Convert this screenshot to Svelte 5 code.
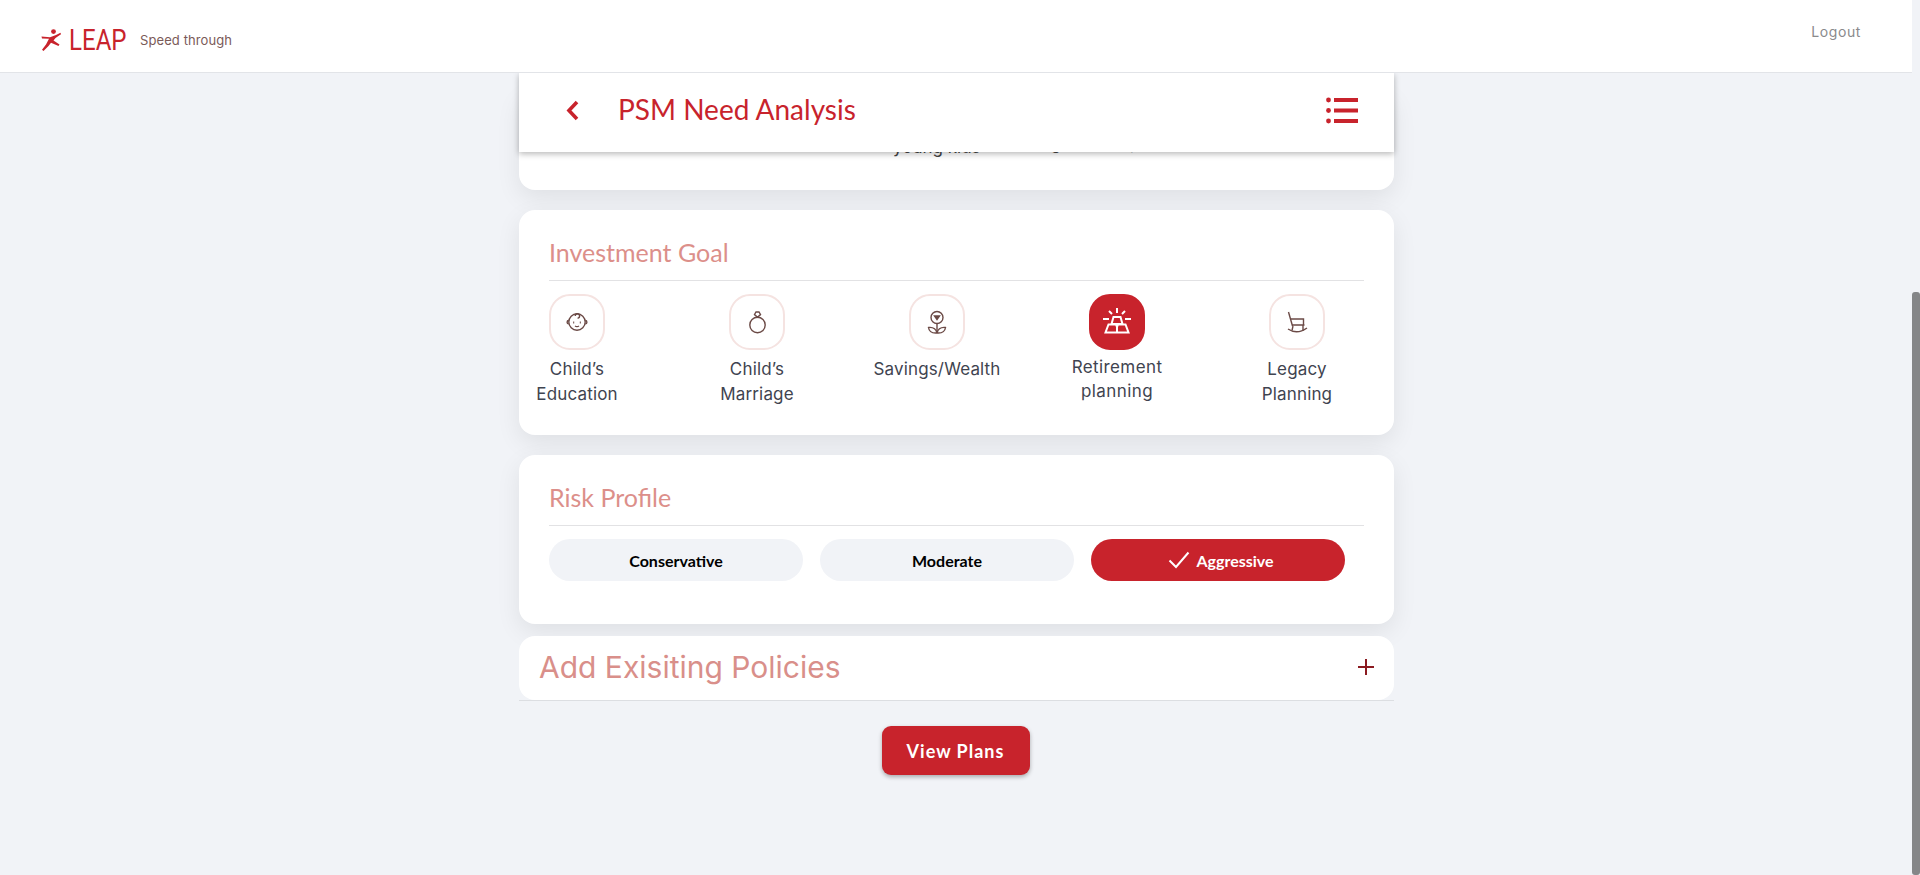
<script>
  const goals = [
    { id: 'edu', lines: ['Child’s', 'Education'] },
    { id: 'marriage', lines: ['Child’s', 'Marriage'] },
    { id: 'wealth', lines: ['Savings/Wealth'] },
    { id: 'retire', lines: ['Retirement', 'planning'], active: true },
    { id: 'legacy', lines: ['Legacy', 'Planning'] }
  ]
  const risks = ['Conservative', 'Moderate', 'Aggressive']
  let risk = $state('Aggressive')
</script>

<div class="shell">
  <div class="page">
    <header class="topbar">
      <div class="brand">
        <svg class="runner" viewBox="0 0 20 22" aria-hidden="true">
          <circle cx="12.5" cy="2.6" r="2.4" fill="#c8232c" />
          <path d="M0.5 7.5 L9 8.2 L15 6 L19.5 3.8 L20 5.2 L14.5 9 L12.5 11.5 L18.5 15.5 L17.5 17 L10 13.8 L7.5 17 L2.5 22 L1 20.8 L5 15.5 L8 9.8 L1 9.5 Z" fill="#c8232c" />
        </svg>
        <span class="leap">LEAP</span>
        <span class="tagline">Speed through</span>
      </div>
      <span class="logout">Logout</span>
    </header>

    <main class="content">
      <div class="titlebar">
        <svg class="back" viewBox="0 0 13 21" aria-hidden="true">
          <path d="M11 2 L3 10.5 L11 19" fill="none" stroke="#c8232c" stroke-width="3.6" />
        </svg>
        <h1>PSM Need Analysis</h1>
        <svg class="menu" viewBox="0 0 32 27" aria-hidden="true">
          <g fill="#c8232c">
            <circle cx="2.5" cy="3" r="2.4" /><rect x="8" y="1" width="24" height="4" />
            <circle cx="2.5" cy="13.5" r="2.4" /><rect x="8" y="11.5" width="24" height="4" />
            <circle cx="2.5" cy="24" r="2.4" /><rect x="8" y="22" width="24" height="4" />
          </g>
        </svg>
      </div>

      <section class="card hidden-card">
        <p><span>young kids</span><span class="upper">are being raised up</span></p>
      </section>

      <section class="card goal-card">
        <h2>Investment Goal</h2>
        <div class="goals">
          {#each goals as goal}
            <div class="goal" class:active={goal.active}>
              <div class="goal-icon">
                <svg viewBox="0 0 32 32" aria-hidden="true">
                  {#if goal.id === 'edu'}
                    <circle cx="16" cy="16" r="8.2" />
                    <path d="M7.8 14.5 a1.7 1.7 0 0 0 0 3.4 M24.2 14.5 a1.7 1.7 0 0 1 0 3.4" />
                    <path d="M14.2 10 a2.2 2.2 0 1 1 2.4 2.2" />
                    <path d="M14 20 q2 1.3 4 0" />
                    <path d="M12.2 16.5 h1 M18.8 16.5 h1" stroke-width="1.8" />
                  {:else if goal.id === 'marriage'}
                    <circle cx="16.5" cy="19" r="7.7" />
                    <path d="M13.5 8.5 L15 6 H18 L19.5 8.5 L16.5 11.3 Z" />
                  {:else if goal.id === 'wealth'}
                    <circle cx="16" cy="11.5" r="6" />
                    <path d="M13.5 10 h5 l-2.5 3.5 Z" fill="#6b4a46" />
                    <path d="M16 17.5 V27" />
                    <path d="M16 27 C10 27.5 8 25 7.5 21.5 C12 21 15 23 16 27 C17 23 20 21 24.5 21.5 C24 25 22 27.5 16 27 Z" />
                  {:else if goal.id === 'retire'}
                    <path d="M16 2 V7 M8 5 L11 8 M24 5 L21 8 M2 13 H8 M24 13 H30" />
                    <path d="M12.5 11 H19.5 L21.5 18 H10.5 Z" />
                    <path d="M7.5 18.5 H15 L16 21 L17 18.5 H24.5 L27.5 26.5 H4.5 Z M16 21 V26.5" />
                  {:else}
                    <path d="M7.5 6 L11.5 20" />
                    <path d="M10 13 H22.5 V19 M11 19 H23.5" />
                    <path d="M12 20 L11 24.5 M22 19 L22 25" />
                    <path d="M7 23 Q16 29 26 22" />
                  {/if}
                </svg>
              </div>
              <div class="goal-label">
                {#each goal.lines as line}
                  <span>{line}</span>
                {/each}
              </div>
            </div>
          {/each}
        </div>
      </section>

      <section class="card risk-card">
        <h2>Risk Profile</h2>
        <div class="risks">
          {#each risks as r}
            <button class="pill" class:selected={risk === r} onclick={() => (risk = r)}>
              {#if risk === r}
                <svg viewBox="0 0 22 18" aria-hidden="true">
                  <path d="M1.5 9.5 L8 16 L20.5 1.5" fill="none" stroke="#fff" stroke-width="2" />
                </svg>
              {/if}
              {r}
            </button>
          {/each}
        </div>
      </section>

      <div class="add-row">
        <section class="add-card">
          <span class="add-title">Add Exisiting Policies</span>
          <span class="plus"></span>
        </section>
      </div>

      <button class="view-plans">View Plans</button>
    </main>
  </div>

  <div class="scrolltrack"><div class="scrollthumb"></div></div>
</div>

<style>
  :global(body) {
    margin: 0;
    background: #f1f3f7;
    overflow: hidden;
  }

  .shell {
    display: flex;
    height: 875px;
    overflow: hidden;
    background: #f1f3f7;
    font-family: Inter, "Liberation Sans", sans-serif;
  }

  .page {
    flex: 1;
    min-width: 0;
  }

  .scrolltrack {
    width: 8px;
    padding-top: 292px;
    box-sizing: border-box;
  }

  .scrollthumb {
    height: 583px;
    background: #858688;
    border-radius: 3px;
  }

  .topbar {
    position: relative;
    z-index: 2;
    height: 73px;
    box-sizing: border-box;
    background: #fff;
    border-bottom: 1px solid #e2e4e8;
    display: flex;
    align-items: flex-start;
    justify-content: space-between;
  }

  .brand {
    display: flex;
    align-items: center;
    height: 40px;
    margin: 20px 0 0 41px;
  }

  .runner {
    width: 20px;
    height: 22px;
  }

  .leap {
    margin-left: 8px;
    width: 58px;
    font-family: Roboto, sans-serif;
    font-size: 29px;
    color: #c8232c;
    transform: scaleX(0.83);
    transform-origin: left center;
  }

  .tagline {
    margin-left: 13px;
    font-size: 13px;
    letter-spacing: 0.1px;
    color: #7a5a58;
  }

  .logout {
    margin: 23px 51px 0 0;
    font-size: 14px;
    letter-spacing: 0.6px;
    color: #8a8a8c;
  }

  .content {
    width: 875px;
    margin-left: 519px;
    display: flex;
    flex-direction: column;
  }

  .titlebar {
    position: relative;
    z-index: 1;
    height: 79px;
    box-sizing: border-box;
    background: #fff;
    box-shadow: 0 2px 6px rgba(0, 0, 0, 0.28);
    display: flex;
    align-items: flex-start;
    padding: 24px 36px 0 47px;
  }

  .back {
    width: 13px;
    height: 21px;
    margin-top: 3px;
  }

  h1 {
    margin: -6px 0 0 39px;
    flex: 1;
    font-family: Lato, sans-serif;
    font-size: 28px;
    line-height: 36px;
    font-weight: 400;
    color: #c8232c;
  }

  .menu {
    width: 32px;
    height: 27px;
  }

  .card {
    background: #fff;
    border-radius: 16px;
    box-shadow: 0 8px 24px rgba(0, 0, 0, 0.08);
    box-sizing: border-box;
    padding: 0 30px;
  }

  .hidden-card {
    height: 100px;
    margin-top: -62px;
    margin-bottom: 20px;
  }

  .hidden-card p {
    display: flex;
    align-items: flex-start;
    gap: 5px;
    margin: 0;
    padding-top: 46px;
    padding-left: 344px;
    font-size: 17px;
    line-height: 22px;
    color: #444;
  }

  .hidden-card .upper {
    margin-top: -4px;
  }

  h2 {
    margin: 0;
    height: 71px;
    box-sizing: border-box;
    padding-top: 26px;
    border-bottom: 1px solid #e2e2e4;
    font-family: Lato, sans-serif;
    font-size: 25px;
    line-height: 32px;
    font-weight: 400;
    color: #dc8f8a;
  }

  .goal-card {
    height: 225px;
    margin-bottom: 20px;
  }

  .goals {
    display: grid;
    grid-template-columns: repeat(5, 180px);
    margin-top: 13px;
  }

  .goal {
    width: 56px;
    display: flex;
    flex-direction: column;
    align-items: center;
  }

  .goal-icon {
    width: 56px;
    height: 56px;
    box-sizing: border-box;
    border: 2px solid #f5e3e1;
    border-radius: 21px;
    display: flex;
    align-items: center;
    justify-content: center;
  }

  .goal-icon svg {
    width: 32px;
    height: 32px;
    fill: none;
    stroke: #6b4a46;
    stroke-width: 1.4;
  }

  .goal.active .goal-icon {
    background: #c8232c;
    border-color: #c8232c;
  }

  .goal.active .goal-icon svg {
    stroke: #fff;
    stroke-width: 2;
  }

  .goal-label {
    flex: none;
    width: max-content;
    margin-top: 7px;
    display: flex;
    flex-direction: column;
    align-items: center;
    font-size: 17px;
    line-height: 25px;
    letter-spacing: 0.15px;
    color: #3f4450;
  }

  .goal.active .goal-label {
    margin-top: 5px;
    line-height: 24px;
    letter-spacing: 0.4px;
  }

  .risk-card {
    height: 169px;
    margin-bottom: 12px;
  }

  .risks {
    display: flex;
    gap: 17px;
    margin-top: 13px;
  }

  .pill {
    width: 254px;
    height: 42px;
    border: 0;
    padding: 0;
    border-radius: 21px;
    background: #f1f3f7;
    display: flex;
    align-items: center;
    justify-content: center;
    gap: 6px;
    font-family: Lato, sans-serif;
    font-size: 16px;
    font-weight: 700;
    color: #000;
  }

  .pill svg {
    width: 22px;
    height: 18px;
  }

  .pill.selected {
    padding-left: 6px;
    background: #c8232c;
    color: #fff;
  }

  .add-row {
    border-bottom: 1px solid #dcdee2;
  }

  .add-card {
    height: 64px;
    box-sizing: border-box;
    background: #fff;
    border-radius: 16px;
    display: flex;
    align-items: center;
    justify-content: space-between;
    padding: 0 20px 2px 20px;
  }

  .add-title {
    font-family: Inter, sans-serif;
    font-size: 30px;
    color: #d98f8a;
  }

  .plus {
    width: 16px;
    height: 16px;
    background:
      linear-gradient(#8b1a20, #8b1a20) center / 16px 2px no-repeat,
      linear-gradient(#8b1a20, #8b1a20) center / 2px 16px no-repeat;
  }

  .view-plans {
    align-self: center;
    width: 148px;
    height: 49px;
    margin: 25px 2px 0 0;
    border: 0;
    border-radius: 9px;
    background: #c8232c;
    box-shadow: 0 2px 4px rgba(0, 0, 0, 0.3);
    font-family: Lato, sans-serif;
    font-size: 18px;
    font-weight: 700;
    letter-spacing: 1px;
    color: #fff;
  }
</style>
